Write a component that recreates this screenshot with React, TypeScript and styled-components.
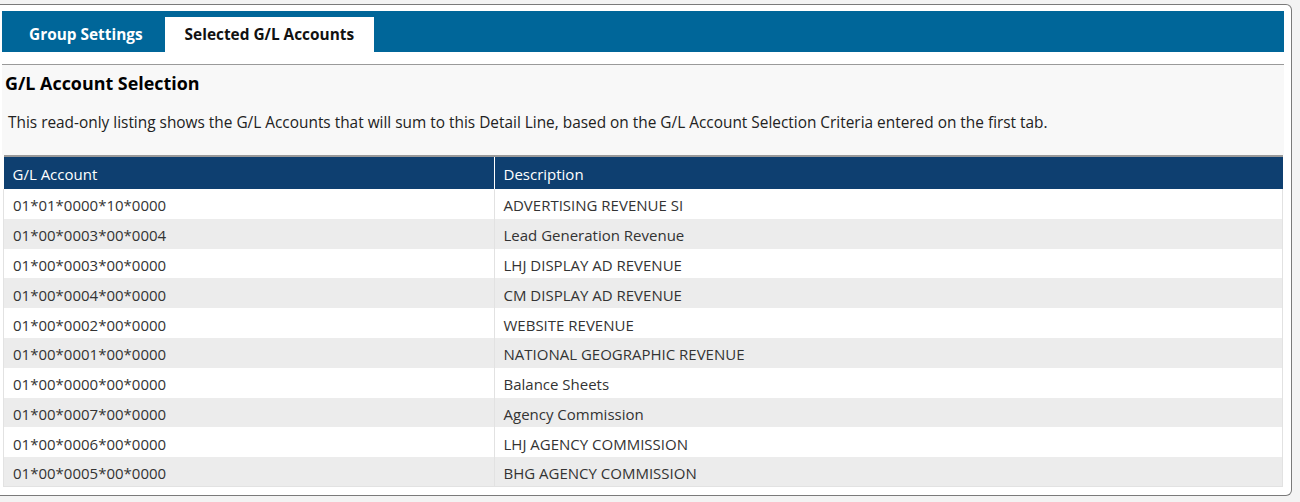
import React from "react";
import styled, { createGlobalStyle } from "styled-components";

const Global = createGlobalStyle`
  html, body {
    margin: 0;
    padding: 0;
    background: #f3f3f3;
  }
  body {
    padding-top: 4px;
    font-family: "Open Sans", "Noto Sans", Arial, sans-serif;
  }
`;

const Frame = styled.div`
  width: 1282px;
  height: 484px;
  background: #ffffff;
  border: 1px solid #7a7a7a;
  border-left: none;
  border-radius: 0 6px 6px 0;
  padding: 6px 7px 0 2px;
  box-sizing: content-box;
  display: flex;
  flex-direction: column;
`;

const TabBar = styled.div`
  height: 41px;
  background: #006699;
  display: flex;
  align-items: flex-end;
  padding-left: 7px;
  gap: 2px;
`;

const Tab = styled.div<{ $active?: boolean }>`
  height: 35px;
  padding: 0 20px;
  display: flex;
  align-items: center;
  font-size: 15.4px;
  font-weight: 700;
  color: ${(p) => (p.$active ? "#111111" : "#ffffff")};
  background: ${(p) => (p.$active ? "#ffffff" : "transparent")};
`;

const Section = styled.div`
  margin-top: 12px;
  border-top: 1px solid #9a9a9a;
  background: #f8f8f8;
  height: 90px;
  display: flex;
  flex-direction: column;
`;

const Title = styled.h2`
  margin: 0;
  padding: 6px 0 0 3px;
  font-size: 17.9px;
  font-weight: 700;
  color: #000000;
  line-height: 24px;
`;

const Desc = styled.p`
  margin: 0;
  padding: 18px 0 0 6px;
  font-size: 15.4px;
  color: #222222;
  line-height: 20px;
`;

const Table = styled.table`
  width: 1280px;
  border-collapse: collapse;
  border-top: 2px solid #9a9a9a;
  margin-left: 1px;
  font-size: 15px;
  table-layout: fixed;
`;

const HeadRow = styled.tr`
  height: 33px;
`;

const HeadCell = styled.th<{ $w?: number }>`
  background: #0e3f70;
  color: #ffffff;
  font-weight: 400;
  text-align: left;
  padding: 1px 0 0 9px;
  vertical-align: middle;
  border-left: 1px solid #ffffff;
  width: ${(p) => (p.$w ? `${p.$w}px` : "auto")};
  &:first-child {
    border-left: none;
  }
`;

const Row = styled.tr<{ $alt: boolean }>`
  height: 29.8px;
  background: ${(p) => (p.$alt ? "#ececec" : "#ffffff")};
`;

const Cell = styled.td`
  color: #333333;
  padding: 3px 0 0 9px;
  border-left: 1px solid #e2e2e2;
  border-right: 1px solid #e2e2e2;
  white-space: nowrap;
`;

const Body = styled.tbody`
  tr:last-child td {
    border-bottom: 1px solid #e2e2e2;
  }
`;

const rows: [string, string][] = [
  ["01*01*0000*10*0000", "ADVERTISING REVENUE SI"],
  ["01*00*0003*00*0004", "Lead Generation Revenue"],
  ["01*00*0003*00*0000", "LHJ DISPLAY AD REVENUE"],
  ["01*00*0004*00*0000", "CM DISPLAY AD REVENUE"],
  ["01*00*0002*00*0000", "WEBSITE REVENUE"],
  ["01*00*0001*00*0000", "NATIONAL GEOGRAPHIC REVENUE"],
  ["01*00*0000*00*0000", "Balance Sheets"],
  ["01*00*0007*00*0000", "Agency Commission"],
  ["01*00*0006*00*0000", "LHJ AGENCY COMMISSION"],
  ["01*00*0005*00*0000", "BHG AGENCY COMMISSION"],
];

export default function App() {
  return (
    <>
      <Global />
      <Frame>
        <TabBar>
          <Tab>Group Settings</Tab>
          <Tab $active>Selected G/L Accounts</Tab>
        </TabBar>
        <Section>
          <Title>G/L Account Selection</Title>
          <Desc>
            This read-only listing shows the G/L Accounts that will sum to this Detail Line, based on the G/L
            Account Selection Criteria entered on the first tab.
          </Desc>
        </Section>
        <Table>
          <thead>
            <HeadRow>
              <HeadCell $w={481}>G/L Account</HeadCell>
              <HeadCell>Description</HeadCell>
            </HeadRow>
          </thead>
          <Body>
            {rows.map(([acct, desc], i) => (
              <Row key={acct} $alt={i % 2 === 1}>
                <Cell>{acct}</Cell>
                <Cell>{desc}</Cell>
              </Row>
            ))}
          </Body>
        </Table>
      </Frame>
    </>
  );
}
